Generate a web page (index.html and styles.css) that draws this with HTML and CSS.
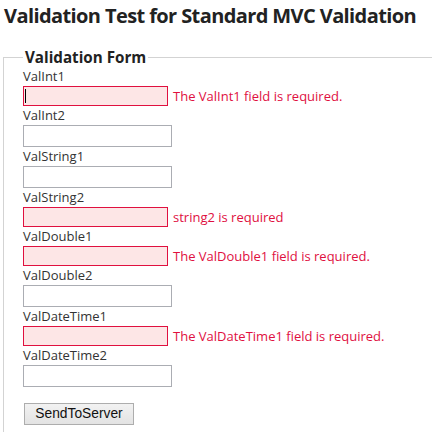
FILE: index.html
```html
<!DOCTYPE html>
<html>
<head>
<meta charset="utf-8">
<title>Validation Test</title>
<link rel="stylesheet" href="styles.css">
</head>
<body>
<h1 class="title">Validation Test for Standard MVC Validation</h1>
<form class="form">
  <fieldset class="set">
    <legend class="legend">Validation Form</legend>
    <div class="field">
      <label class="label">ValInt1</label>
      <div class="line">
        <span class="wrap"><input class="input error" type="text"><span class="caret"></span></span>
        <span class="msg">The ValInt1 field is required.</span>
      </div>
    </div>
    <div class="field">
      <label class="label">ValInt2</label>
      <div class="line"><input class="input" type="text"></div>
    </div>
    <div class="field">
      <label class="label">ValString1</label>
      <div class="line"><input class="input" type="text"></div>
    </div>
    <div class="field">
      <label class="label">ValString2</label>
      <div class="line"><input class="input error" type="text"><span class="msg">string2 is required</span></div>
    </div>
    <div class="field">
      <label class="label">ValDouble1</label>
      <div class="line"><input class="input error" type="text"><span class="msg">The ValDouble1 field is required.</span></div>
    </div>
    <div class="field">
      <label class="label">ValDouble2</label>
      <div class="line"><input class="input" type="text"></div>
    </div>
    <div class="field">
      <label class="label">ValDateTime1</label>
      <div class="line"><input class="input error" type="text"><span class="msg">The ValDateTime1 field is required.</span></div>
    </div>
    <div class="field">
      <label class="label">ValDateTime2</label>
      <div class="line"><input class="input" type="text"></div>
    </div>
    <div class="actions">
      <button class="button" type="button">SendToServer</button>
    </div>
  </fieldset>
</form>
</body>
</html>
```
FILE: styles.css
```css
html, body {
  margin: 0;
  padding: 0;
  overflow: hidden;
  background: #fff;
}
body {
  font-family: "Open Sans", "Noto Sans", sans-serif;
  color: #333;
}
.title {
  margin: 2px 0 0 4px;
  font-size: 20px;
  line-height: 28px;
  font-weight: 700;
  letter-spacing: -0.6px;
  color: #222;
  white-space: nowrap;
}
.form {
  margin: 17px 0 0 3px;
}
.set {
  margin: 0;
  border: 1px solid #d3d3d3;
  border-right: 0;
  padding: 0 0 20px 19px;
  min-width: 0;
}
.legend {
  padding: 0 2px;
  font-size: 15.2px;
  line-height: 20px;
  font-weight: 700;
  color: #222;
}
.field {
  display: flex;
  flex-direction: column;
  align-items: flex-start;
}
.label {
  display: block;
  font-size: 13px;
  line-height: 19px;
  height: 19px;
  color: #333;
}
.line {
  display: flex;
  align-items: center;
}
.wrap {
  position: relative;
  display: flex;
}
.input {
  box-sizing: border-box;
  width: 149px;
  height: 22px;
  margin: 0;
  padding: 0 2px;
  border: 1px solid #abadb3;
  background: #fff;
  font: inherit;
  outline: none;
}
.input.error {
  width: 145px;
  height: 20px;
  border: 1px solid #e0103f;
  background: #fde6e6;
}
.caret {
  position: absolute;
  left: 2px;
  top: 3px;
  width: 1px;
  height: 14px;
  background: #000;
}
.msg {
  margin-left: 5px;
  font-size: 13px;
  line-height: 19px;
  color: #e0103f;
  white-space: nowrap;
}
.actions {
  margin-top: 14px;
  padding-left: 1px;
}
.button {
  box-sizing: border-box;
  width: 110px;
  height: 22px;
  margin: 0;
  padding: 0;
  border: 1px solid #adadad;
  border-radius: 0;
  background: linear-gradient(#f2f2f2, #e3e3e3);
  font-family: "Liberation Sans", Arial, sans-serif;
  font-size: 13.8px;
  color: #111;
}
```
